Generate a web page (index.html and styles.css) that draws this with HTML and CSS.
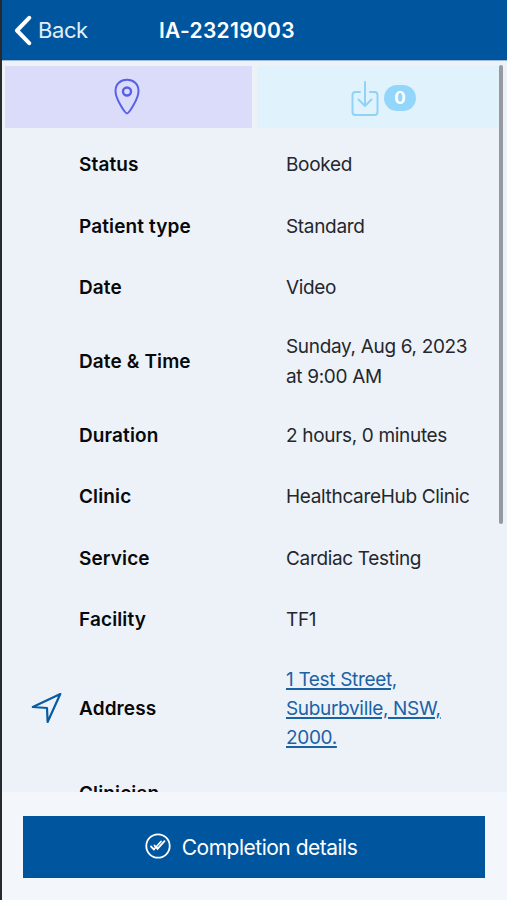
FILE: index.html
```html
<!DOCTYPE html>
<html lang="en">
  <head>
    <meta charset="UTF-8" />
    <meta name="viewport" content="width=device-width, initial-scale=1.0" />
    <title>IA-23219003</title>
    <link rel="stylesheet" href="styles.css">
  </head>

  <body>
    <div class="app">
      <header class="header">
        <a class="back" href="#">
          <svg width="18" height="31" viewBox="0 0 18 31" fill="none">
            <path d="M15.2 2.8 L3 15.5 L15.2 28.2" stroke="#fff" stroke-width="4" stroke-linecap="round" stroke-linejoin="round" />
          </svg>
          <span>Back</span>
        </a>
        <h1>IA-23219003</h1>
      </header>

      <main class="content">
        <div class="tabs">
          <button class="tab tab-location" aria-label="Location">
            <svg width="26" height="38" viewBox="0 0 26 38" fill="none" stroke="#5660e8" stroke-linejoin="round">
              <path d="M13 35.5 C11 35.5 1.5 20.5 1.5 13.2 C1.5 6 6.5 1.8 13 1.8 C19.5 1.8 24.5 6 24.5 13.2 C24.5 20.5 15 35.5 13 35.5 Z" stroke-width="2" />
              <circle cx="13" cy="13.5" r="4" stroke-width="2.4" />
            </svg>
          </button>
          <button class="tab tab-download" aria-label="Downloads">
            <svg width="28" height="37" viewBox="0 0 28 37" fill="none" stroke="#8fd3f8" stroke-width="2" stroke-linecap="round" stroke-linejoin="round">
              <path d="M9 12 H4.500 Q1.500 12 1.500 15 V32 Q1.500 35 4.500 35 H23.500 Q26.500 35 26.500 32 V15 Q26.500 12 23.500 12 H19" />
              <path d="M14 2 V26 M7.500 19.500 L14 26 L20.500 19.500" />
            </svg>
            <span class="count">0</span>
          </button>
        </div>

        <dl class="details">
          <div class="row">
            <dt>Status</dt>
            <dd>Booked</dd>
          </div>
          <div class="row">
            <dt>Patient type</dt>
            <dd>Standard</dd>
          </div>
          <div class="row">
            <dt>Date</dt>
            <dd>Video</dd>
          </div>
          <div class="row">
            <dt>Date &amp; Time</dt>
            <dd>Sunday, Aug 6, 2023<br>at 9:00 AM</dd>
          </div>
          <div class="row">
            <dt>Duration</dt>
            <dd>2 hours, 0 minutes</dd>
          </div>
          <div class="row">
            <dt>Clinic</dt>
            <dd>HealthcareHub Clinic</dd>
          </div>
          <div class="row">
            <dt>Service</dt>
            <dd>Cardiac Testing</dd>
          </div>
          <div class="row">
            <dt>Facility</dt>
            <dd>TF1</dd>
          </div>
          <div class="row">
            <dt>
              <svg class="row-icon" width="32" height="32" viewBox="0 0 32 32" fill="none">
                <path d="M29.300 2 L1.800 15 L16 16 L16.600 30 Z" stroke="#075ba5" stroke-width="2.200" stroke-linejoin="round" />
              </svg>
              Address
            </dt>
            <dd><a href="#">1 Test Street,<br>Suburbville, NSW,<br>2000.</a></dd>
          </div>
          <div class="row row-last">
            <dt>Clinician</dt>
            <dd></dd>
          </div>
        </dl>
        <div class="scrollbar"></div>
      </main>

      <footer class="footer">
        <button class="complete">
          <svg width="26" height="26" viewBox="0 0 26 26" fill="none" stroke="#fff">
            <circle cx="13" cy="13" r="11.700" stroke-width="1.800" />
            <path d="M6 13.500 L9 16.500 M9.500 12.500 L12.500 15.800 L19.500 8.200 M8.800 16.500 L16 8.500" stroke-width="1.800" stroke-linecap="round" />
          </svg>
          <span>Completion details</span>
        </button>
      </footer>
    </div>
  </body>
</html>
```
FILE: styles.css
```css
:root {
  --primary-color: #00559f;
  --page-color: #edf2f9;
  --footer-color: #f3f6fb;
}

* {
  margin: 0;
  padding: 0;
  box-sizing: border-box;
  font-family: Inter, "Liberation Sans", sans-serif;
}

body {
  height: 900px;
  overflow: hidden;
  background: var(--page-color);
}

.app {
  height: 900px;
  display: flex;
  flex-direction: column;
  border-left: 2px solid #27292e;
}

.header {
  height: 61px;
  flex: none;
  display: flex;
  align-items: center;
  background: var(--primary-color);
  color: #fff;
  border-bottom: 1px solid #9dbbd9;
}

.back {
  width: 157px;
  padding-left: 12px;
  display: flex;
  align-items: center;
  gap: 6px;
  color: #e3eefa;
  font-size: 22px;
  letter-spacing: -0.4px;
  text-decoration: none;
}

.header h1 {
  font-size: 21px;
  font-weight: 600;
  letter-spacing: 0.3px;
}

.content {
  position: relative;
  flex: none;
  height: 731px;
  overflow: hidden;
}

.tabs {
  display: flex;
  gap: 5px;
  padding: 5px 7px 0 3px;
}

.tab {
  height: 62px;
  display: flex;
  align-items: center;
  justify-content: center;
  border: none;
}

.tab-location {
  width: 247px;
  padding-right: 3px;
  background: #dbdcfa;
}

.tab-download {
  flex: 1;
  gap: 5px;
  padding: 2px 0 0 10px;
  background: #e0f2fc;
}

.count {
  width: 32px;
  height: 26px;
  border-radius: 13px;
  background: #93d6fb;
  color: #fff;
  font-size: 17px;
  font-weight: 700;
  line-height: 26px;
  text-align: center;
}

.details {
  padding-top: 6.2px;
  font-size: 19px;
  line-height: 29.3px;
}

.row {
  display: flex;
  align-items: center;
  min-height: 61.4px;
  padding: 14px 0 14px 77px;
}

.row-last {
  padding-top: 8px;
}

.row dt {
  position: relative;
  width: 207px;
  flex: none;
  color: #08090b;
  font-weight: 600;
  letter-spacing: 0.12px;
}

.row dd {
  color: #24272c;
  letter-spacing: -0.33px;
  white-space: nowrap;
}

.row a {
  color: #1b62a5;
  text-decoration: underline;
  text-decoration-thickness: 1.5px;
  text-underline-offset: 2px;
}

.row-icon {
  position: absolute;
  left: -48px;
  top: -2px;
}

.scrollbar {
  position: absolute;
  top: 4px;
  right: 4px;
  width: 4px;
  height: 459px;
  border-radius: 2px;
  background: #949a9f;
}

.footer {
  flex: 1;
  padding: 24px 22px 0 21px;
  background: var(--footer-color);
}

.complete {
  width: 100%;
  height: 62px;
  padding-right: 6px;
  display: flex;
  align-items: center;
  justify-content: center;
  gap: 11px;
  border: none;
  background: var(--primary-color);
  color: #fff;
  font-size: 21px;
  letter-spacing: -0.5px;
}

.complete svg {
  position: relative;
  top: -1px;
}
```
